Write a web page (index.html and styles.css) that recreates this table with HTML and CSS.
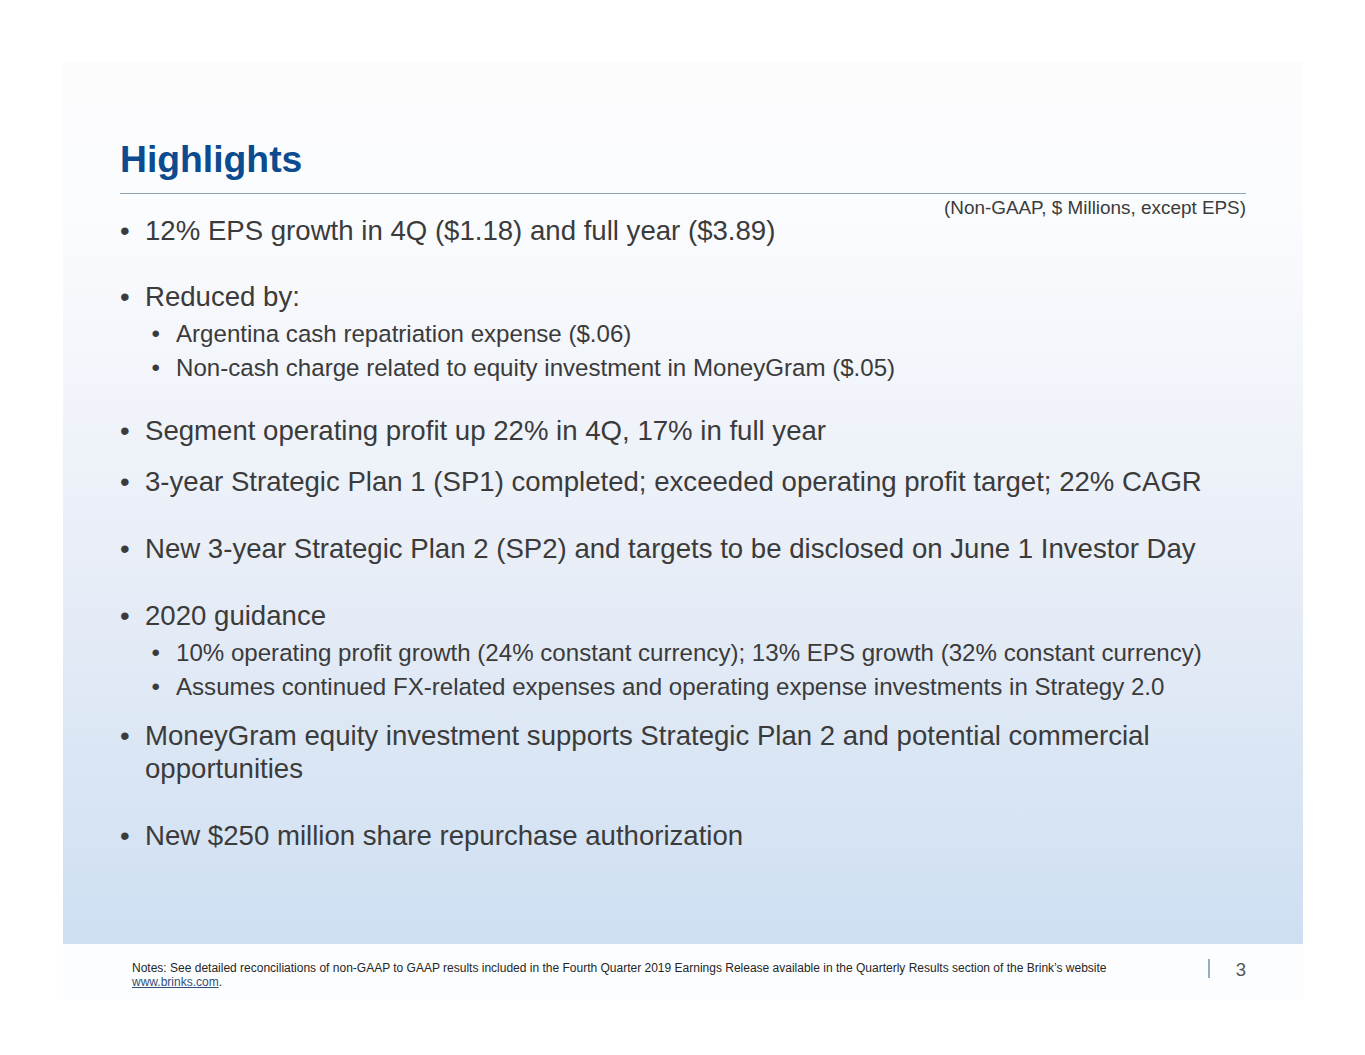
FILE: index.html
```html
<!DOCTYPE html>
<html lang="en">
<head>
<meta charset="utf-8">
<title>Highlights</title>
<link rel="stylesheet" href="styles.css">
</head>
<body>
<div class="page">
  <div class="slide">
    <section class="main">
      <h1 class="title">Highlights</h1>
      <div class="rule"></div>
      <p class="unit-note">(Non-GAAP, $ Millions, except EPS)</p>
      <ul class="bullets">
        <li class="item first"><span class="dot">•</span><span class="txt">12% EPS growth in 4Q ($1.18) and full year ($3.89)</span></li>
        <li class="item gap-lg"><span class="dot">•</span><span class="txt">Reduced by:</span></li>
        <li class="sub gap-s1"><span class="dot">•</span><span class="txt">Argentina cash repatriation expense ($.06)</span></li>
        <li class="sub gap-s2"><span class="dot">•</span><span class="txt">Non-cash charge related to equity investment in MoneyGram ($.05)</span></li>
        <li class="item gap-lg2"><span class="dot">•</span><span class="txt">Segment operating profit up 22% in 4Q, 17% in full year</span></li>
        <li class="item gap-sm"><span class="dot">•</span><span class="txt">3-year Strategic Plan 1 (SP1) completed; exceeded operating profit target; 22% CAGR</span></li>
        <li class="item gap-lg3"><span class="dot">•</span><span class="txt">New 3-year Strategic Plan 2 (SP2) and targets to be disclosed on June 1 Investor Day</span></li>
        <li class="item gap-lg4"><span class="dot">•</span><span class="txt">2020 guidance</span></li>
        <li class="sub gap-s3"><span class="dot">•</span><span class="txt">10% operating profit growth (24% constant currency); 13% EPS growth (32% constant currency)</span></li>
        <li class="sub gap-s4"><span class="dot">•</span><span class="txt">Assumes continued FX-related expenses and operating expense investments in Strategy 2.0</span></li>
        <li class="item gap-sm"><span class="dot">•</span><span class="txt">MoneyGram equity investment supports Strategic Plan 2 and potential commercial opportunities</span></li>
        <li class="item gap-lg3"><span class="dot">•</span><span class="txt">New $250 million share repurchase authorization</span></li>
      </ul>
    </section>
    <footer class="footer">
      <p class="notes">Notes: See detailed reconciliations of non-GAAP to GAAP results included in the Fourth Quarter 2019 Earnings Release available in the Quarterly Results section of the Brink’s website<br><a class="link" href="#">www.brinks.com</a>.</p>
      <span class="bar"></span>
      <span class="pagenum">3</span>
    </footer>
  </div>
</div>
</body>
</html>
```

FILE: styles.css
```css
* { box-sizing: border-box; }

html, body {
  margin: 0;
  padding: 0;
  background: #ffffff;
}

body {
  font-family: "Liberation Sans", Arial, sans-serif;
  color: #3b3b3b;
}

.page {
  padding: 62px 62px 55px 63px;
}

.slide {
  width: 1240px;
  height: 938px;
  display: flex;
  flex-direction: column;
}

.main {
  height: 882px;
  padding: 74.5px 57px 0 57px;
  background: linear-gradient(to bottom, #fcfcfd 0%, #fbfcfe 16%, #e9eef7 55%, #cedff2 100%);
}

.title {
  margin: 0;
  font-size: 37.3px;
  line-height: 45px;
  font-weight: bold;
  color: #0c4b8f;
}

.rule {
  margin-top: 11.5px;
  height: 1px;
  background: #8ea4b6;
}

.unit-note {
  margin: 3.5px 0 0 0;
  font-size: 18.9px;
  line-height: 20px;
  text-align: right;
  color: #3b3b3b;
}

.bullets {
  list-style: none;
  margin: -4px 0 0 0;
  padding: 0;
}

.item {
  display: flex;
  font-size: 27.6px;
  line-height: 33.1px;
}

.item .dot {
  flex: 0 0 25px;
}

.sub {
  display: flex;
  font-size: 24.1px;
  line-height: 28.9px;
  padding-left: 31.5px;
}

.sub .dot {
  flex: 0 0 24.5px;
}

.txt {
  flex: 1;
}

.first { margin-top: 0; }
.gap-lg { margin-top: 33.4px; }
.gap-lg2 { margin-top: 32px; }
.gap-lg3 { margin-top: 34.1px; }
.gap-lg4 { margin-top: 34.6px; }
.gap-sm { margin-top: 17px; }
.gap-s1 { margin-top: 6.6px; }
.gap-s2 { margin-top: 5px; }
.gap-s3 { margin-top: 6.9px; }
.gap-s4 { margin-top: 4.4px; }

.footer {
  height: 56px;
  background: #fcfdfe;
  display: flex;
  align-items: flex-start;
  padding: 15px 57px 0 69px;
}

.notes {
  flex: 1;
  margin: 2.1px 0 0 0;
  font-size: 12px;
  line-height: 14px;
  color: #262626;
}

.link {
  color: #34507a;
  text-decoration: underline;
}

.bar {
  width: 2px;
  height: 19px;
  background: #8fb0c8;
}

.pagenum {
  margin-left: 26px;
  font-size: 18.6px;
  line-height: 21px;
  color: #555555;
}
```
